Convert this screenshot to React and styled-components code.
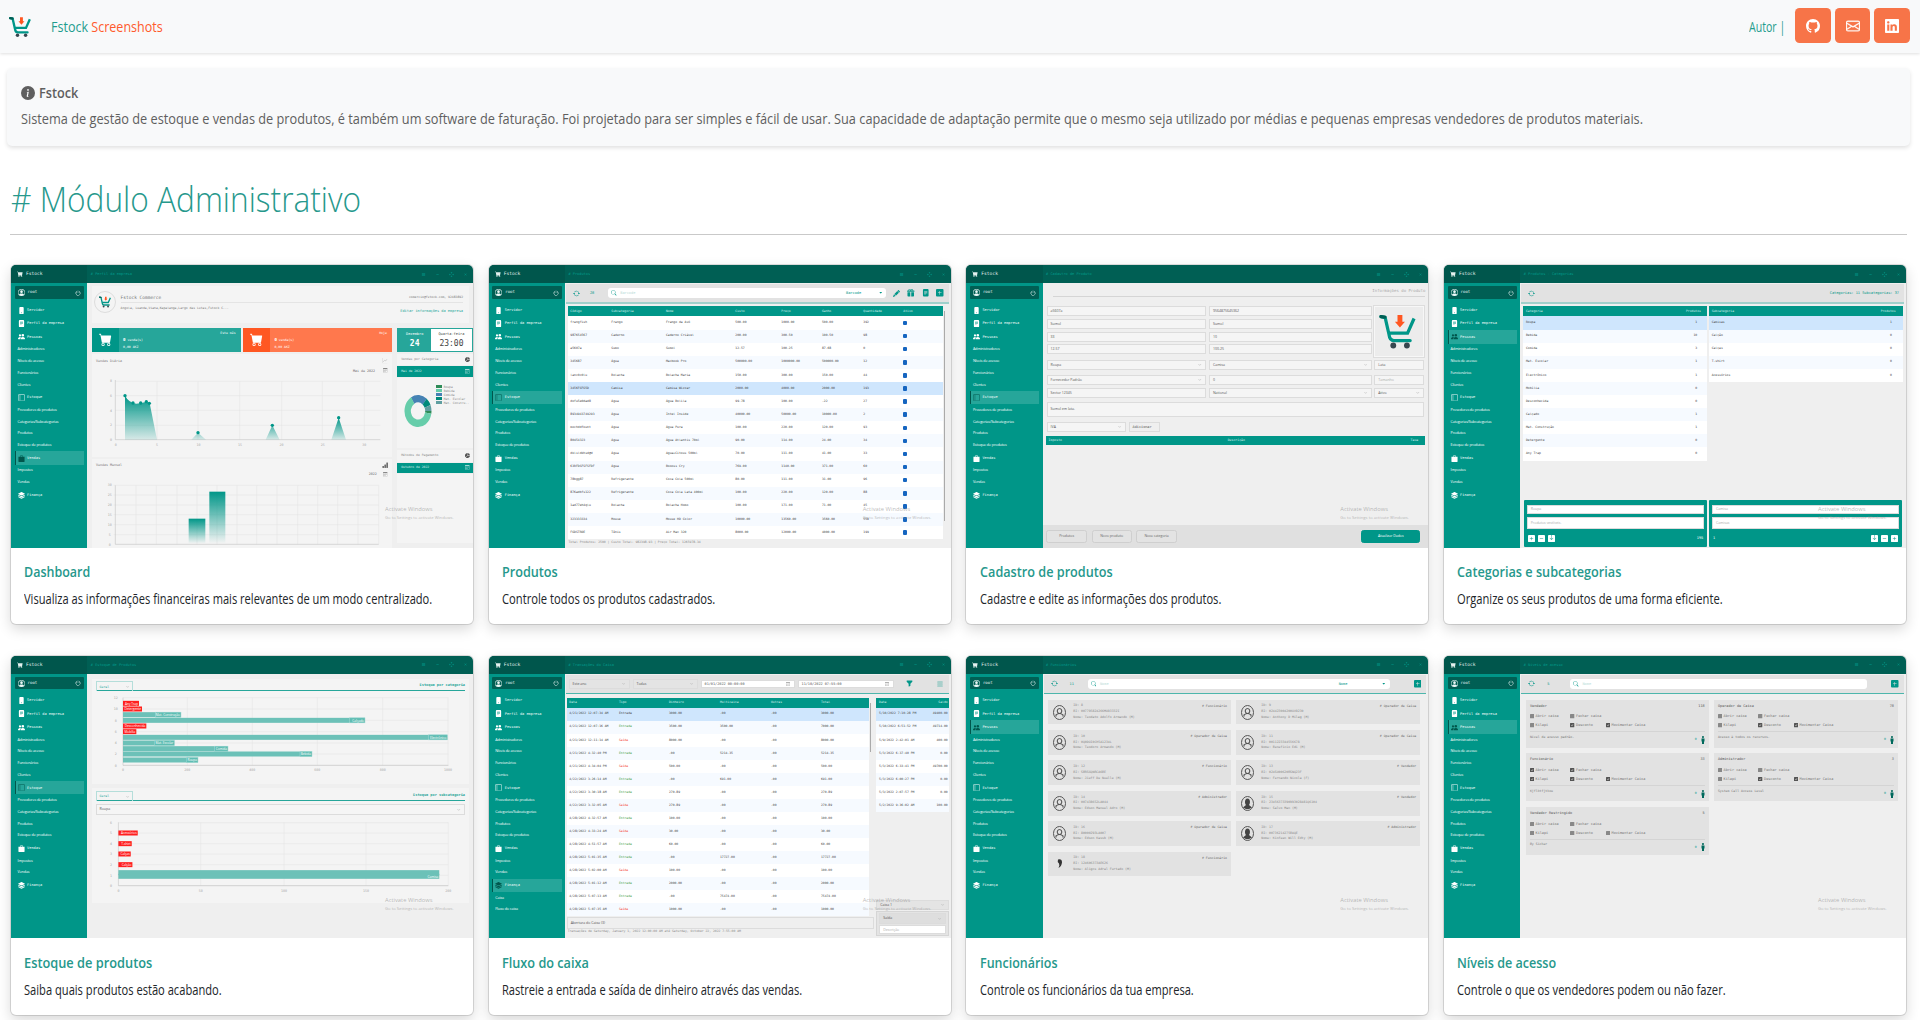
import React, { useLayoutEffect, useRef, useState } from "react";
import styled, { createGlobalStyle, css } from "styled-components";
import {
  BsGithub, BsEnvelope, BsLinkedin, BsInfoCircleFill, BsPhoneFill, BsFileTextFill, BsPeopleFill,
  BsLayoutSidebar, BsBagFill, BsStack, BsPersonCircle, BsPower, BsArrowRepeat, BsSearch, BsPencilFill,
  BsPlusSquareFill, BsDashSquareFill, BsSaveFill, BsFunnelFill, BsList, BsChevronDown, BsPieChartFill,
  BsGraphUp, BsBarChartFill, BsSquareFill, BsCheckSquareFill, BsCalendar3, BsCartFill, BsArrowsMove,
  BsX, BsDash, BsCaretDownFill, BsGiftFill,
} from "react-icons/bs";

const teal = "#009688";
const soft = "#26a69a";
const mono = '"DejaVu Sans Mono", "Liberation Mono", monospace';
const sans = '"Open Sans", "Noto Sans", sans-serif';

const Global = createGlobalStyle`
  * { box-sizing: border-box; }
  html, body { margin: 0; background: #fff; font-family: ${sans}; }
  body { height: 1020px; overflow: hidden; }
  svg { display: block; flex: none; }
`;

/* ---------- condensed text that fills a given width ---------- */
const FitBox = styled.span`
  display: block;
  width: ${(p) => p.$w}px;
  white-space: nowrap;
`;
const FitText = styled.span`
  display: inline-block;
  transform-origin: 0 50%;
`;
function Fit({ w, children }) {
  const ref = useRef(null);
  const [k, setK] = useState(1);
  useLayoutEffect(() => {
    setK(w / ref.current.offsetWidth);
  }, [w]);
  return (
    <FitBox $w={w}>
      <FitText ref={ref} style={{ transform: `scaleX(${k})` }}>{children}</FitText>
    </FitBox>
  );
}

/* ---------- page ---------- */
const Page = styled.div`
  height: 1020px;
  overflow: hidden;
`;
const Navbar = styled.header`
  display: flex;
  align-items: center;
  height: 53px;
  padding: 0 10px 2px 9px;
  background: #f8f9fa;
  box-shadow: 0 1px 3px rgba(0, 0, 0, 0.13);
`;
const Brand = styled.div`
  display: flex;
  align-items: center;
  gap: 20px;
  flex: 1;
  font-size: 15px;
  line-height: 20px;
  color: #1f9d8e;
`;
const Accent = styled.span`
  color: #ff5a2c;
`;
const LogoSlot = styled.div`
  padding-top: 3px;
`;
const Author = styled.div`
  margin-right: 10px;
  font-size: 15px;
  line-height: 20px;
  color: #1f9d8e;
`;
const Social = styled.div`
  display: flex;
  gap: 4px;
`;
const SocialButton = styled.a`
  display: grid;
  place-items: center;
  width: 35.6px;
  height: 35px;
  border-radius: 4.5px;
  background: #f77448;
  color: #fff;
`;
const Notice = styled.section`
  margin: 15px 10px 0 7px;
  height: 78px;
  padding: 15px 14px;
  border-radius: 5px;
  background: #f8f9fa;
  box-shadow: 0 2px 4px rgba(0, 0, 0, 0.12);
  color: #5f5f5f;
  font-size: 14px;
`;
const NoticeTitle = styled.div`
  display: flex;
  align-items: center;
  gap: 4px;
  line-height: 20px;
  font-weight: 600;
`;
const NoticeText = styled.div`
  margin-top: 6px;
  font-size: 14px;
  line-height: 20px;
`;
const Heading = styled.h1`
  margin: 28px 13px 0 10px;
  padding: 0 0 10px 1px;
  border-bottom: 1.5px solid #c9c9c9;
  font-size: 35px;
  line-height: 50px;
  font-weight: 300;
  color: #26988c;
`;
const Gallery = styled.main`
  display: grid;
  grid-template-columns: repeat(4, 462px);
  column-gap: 15.67px;
  row-gap: 32px;
  margin: 30px 0 0 11px;
`;
const Card = styled.article`
  height: 359px;
  border-radius: 5px;
  background: #fff;
  overflow: hidden;
  box-shadow: 0 0 0 1px rgba(0, 0, 0, 0.12), 0 5px 14px rgba(0, 0, 0, 0.16);
`;
const CardBody = styled.div`
  padding: ${(p) => (p.$second ? 15 : 14)}px 13.4px 0;
  font-size: 14px;
  line-height: 20px;
  color: #212529;
`;
const CardTitle = styled.div`
  margin-bottom: 7px;
  font-weight: 600;
  color: #26988c;
`;

/* ---------- miniature application window ---------- */
const Shot = styled.div`
  position: relative;
  display: flex;
  flex-direction: column;
  height: ${(p) => (p.$second ? 281.5 : 283)}px;
  overflow: hidden;
  background: #efefef;
  font-family: ${mono};
  font-size: 3.6px;
  line-height: 1.2;
  white-space: nowrap;
`;
const TopBar = styled.div`
  display: flex;
  align-items: center;
  flex: none;
  height: ${(p) => (p.$second ? 17.5 : 18.3)}px;
  background: #005f54;
  color: #009a8a;
`;
const TopBrand = styled.div`
  display: flex;
  align-items: center;
  gap: 3px;
  width: 76.3px;
  height: 100%;
  padding-left: 6px;
  background: #00564c;
  color: #e4f1ef;
  font-size: 4.6px;
`;
const TopTitle = styled.div`
  flex: 1;
  padding-left: 3.5px;
`;
const TopTools = styled.div`
  display: flex;
  gap: 9px;
  padding-right: 5px;
`;
const Body = styled.div`
  display: flex;
  flex: 1;
  min-height: 0;
`;
const Side = styled.nav`
  flex: none;
  width: 76.3px;
  padding: 3.2px 3.3px 0 3.6px;
  background: ${teal};
  color: #effaf9;
`;
const User = styled.div`
  display: flex;
  align-items: center;
  gap: 3px;
  height: 12.8px;
  margin-bottom: 4.2px;
  padding: 0 3px;
  border-radius: 1px;
  background: #005f54;
  font-size: 4px;
  span { flex: 1; }
`;
const Major = styled.div`
  display: flex;
  align-items: center;
  gap: 2.5px;
  height: 13.4px;
  padding-left: 2px;
  border-left: 1px solid ${(p) => (p.$on ? "#00564c" : "transparent")};
  background: ${(p) => (p.$on ? soft : "none")};
  svg { color: ${(p) => (p.$on ? "#00564c" : "#fff")}; }
`;
const Minor = styled.div`
  display: flex;
  align-items: center;
  height: 11.8px;
  padding-left: 3px;
  font-family: ${sans};
  font-size: 3.7px;
  letter-spacing: -0.12px;
  color: #fff;
`;
const Content = styled.div`
  flex: 1;
  min-width: 0;
  display: flex;
  flex-direction: column;
  padding: ${(p) => p.$pad || "0"};
`;
const Watermark = styled.div`
  position: absolute;
  left: 374px;
  top: 241px;
  font-family: ${sans};
  font-size: 5.8px;
  line-height: 7.8px;
  color: rgba(140, 140, 140, 0.6);
  div + div { font-size: 4.2px; }
`;

function CartLogo({ size, weight = 10 }) {
  return (
    <svg width={size} height={size} viewBox="0 0 114 112">
      <path d="M6 10 L19 13 L31 66 Q33 84 46 84 H96" fill="none" stroke={teal} strokeWidth={weight} strokeLinecap="round" />
      <path d="M6 10 L18 12" fill="none" stroke="#005f54" strokeWidth={weight} strokeLinecap="round" />
      <path d="M31 61 H88 L108 16" fill="none" stroke={teal} strokeWidth={weight} />
      <path d="M57 5 H72 V26 H80 L64.5 44 L49 26 H57 Z" fill="#ff5722" />
      <circle cx="44" cy="99" r="9" fill="#37474f" />
      <circle cx="86" cy="99" r="9" fill="#37474f" />
    </svg>
  );
}

const menu = [
  ["Servidor", BsPhoneFill],
  ["Perfil da empresa", BsFileTextFill],
  ["Pessoas", BsPeopleFill, ["Administradores", "Níveis de acesso", "Funcionários", "Clientes"]],
  ["Estoque", BsLayoutSidebar, ["Provedores de produtos", "Categorias/Subcategorias", "Produtos", "Estoque de produtos"]],
  ["Vendas", BsBagFill, ["Impostos", "Vendas"]],
  ["Finança", BsStack],
];

function AppWindow({ title, active, second, extra, children, pad }) {
  return (
    <Shot $second={second}>
      <TopBar $second={second}>
        <TopBrand><BsCartFill size={6} />Fstock</TopBrand>
        <TopTitle># {title}</TopTitle>
        <TopTools><BsList size={5} /><BsDash size={5} /><BsArrowsMove size={5} /><BsX size={5} /></TopTools>
      </TopBar>
      <Body>
        <Side>
          <User><BsPersonCircle size={7} /><span>root</span><BsPower size={6} /></User>
          {menu.map(([name, Icon, subs]) => (
            <React.Fragment key={name}>
              <Major $on={active === name}><Icon size={7} />{name}</Major>
              {(subs || []).map((s) => <Minor key={s}>{s}</Minor>)}
            </React.Fragment>
          ))}
          {(extra || []).map((s) => <Minor key={s}>{s}</Minor>)}
        </Side>
        <Content $pad={pad}>{children}</Content>
      </Body>
      <Watermark><div>Activate Windows</div><div>Go to Settings to activate Windows.</div></Watermark>
    </Shot>
  );
}

/* ---------- shared pieces ---------- */
const Tools = styled.div`
  display: flex;
  align-items: center;
  flex: none;
  gap: ${(p) => p.$gap || 7}px;
  height: 19.5px;
  margin: 1px 2px 0 1px;
  padding: 0 5px 0 ${(p) => p.$left || 7}px;
  background: #e2e2e2;
  border-bottom: ${(p) => (p.$thin ? 1 : 2.3)}px solid ${(p) => (p.$thin ? "#4db6ac" : "#9fd0cb")};
  color: ${teal};
`;
const Count = styled.div`
  width: 8px;
  margin-left: 3px;
`;
const SearchBox = styled.div`
  display: flex;
  align-items: center;
  gap: 3.5px;
  width: ${(p) => p.$w}px;
  height: 10.5px;
  margin-left: ${(p) => p.$ml || 4}px;
  padding: 0 4px 0 3px;
  border-radius: 3px;
  background: #fff;
  i { flex: 1; font-style: normal; color: #b9dcd8; }
  b { font-weight: 400; margin-right: 14px; }
`;
const Push = styled.div`
  flex: 1;
`;
const cols = css`
  display: grid;
  grid-template-columns: ${(p) => p.$cols};
  align-items: center;
  padding-left: 2.7px;
`;
const Table = styled.div`
  width: ${(p) => p.$w}px;
  color: #444;
  font-size: 3.1px;
`;
const Head = styled.div`
  ${cols}
  height: 10px;
  background: ${teal};
  color: #d5efec;
`;
const Line = styled.div`
  ${cols}
  height: ${(p) => p.$h || 13.1}px;
  background: ${(p) => (p.$sel ? "#cfe6fd" : p.$odd ? "#f6faff" : "#fff")};
`;
const Cell = styled.span`
  color: ${(p) => p.$c || "inherit"};
`;
const tone = (v) => (v === "Entrada" ? "#43a047" : v === "Saída" ? "#f44336" : undefined);
function DataTable({ w, columns, head, rows, selected, h }) {
  return (
    <Table $w={w}>
      <Head $cols={columns}>{head.map((x, i) => <span key={i}>{x}</span>)}</Head>
      {rows.map((r, i) => (
        <Line key={i} $cols={columns} $h={h} $odd={i % 2 === 1} $sel={i === selected}>
          {r.map((v, j) => <Cell key={j} $c={i === selected ? undefined : tone(v)}>{v}</Cell>)}
        </Line>
      ))}
    </Table>
  );
}
const Panel = styled.div`
  display: flex;
  flex-direction: column;
  flex: none;
  height: ${(p) => p.$h}px;
  padding: ${(p) => p.$p || "0"};
  background: #f4f4f4;
`;
const Columns = styled.div`
  display: flex;
  gap: ${(p) => p.$gap || 0}px;
  align-items: flex-start;
  padding: ${(p) => p.$p || "0"};
`;

/* ---------- dashboard ---------- */
const Company = styled(Panel)`
  flex-direction: row;
  align-items: center;
  margin: 2.7px 4px 4.6px 0;
  gap: 5px;
  padding: 0 6px 6px 2px;
`;
const Round = styled.div`
  display: grid;
  place-items: center;
  width: 22px;
  height: 22px;
  border: 0.8px solid #ddd;
  border-radius: 50%;
`;
const CompanyInfo = styled.div`
  flex: 1;
  padding-top: 5px;
  color: #777;
`;
const CompanyLine = styled.div`
  display: flex;
  justify-content: space-between;
  align-items: center;
  height: ${(p) => p.$h || 10}px;
  border-bottom: ${(p) => (p.$rule ? "0.6px solid #e4e4e4" : "0")};
  font-size: ${(p) => p.$fs || 3.1}px;
  em { font-style: normal; font-size: 3.6px; color: ${soft}; padding-top: 5px; }
  small { font-size: 3.1px; }
`;
const Stat = styled.div`
  display: flex;
  width: 149px;
  height: 24px;
  background: ${(p) => p.$bg};
  color: #fff;
  font-size: 3.2px;
`;
const StatIcon = styled.div`
  display: grid;
  place-items: center;
  width: 27px;
  background: ${(p) => p.$bg};
`;
const StatText = styled.div`
  flex: 1;
  padding: 8px 0 0 4.5px;
  line-height: 7.5px;
  b { font-size: 4.2px; }
`;
const StatTag = styled.div`
  padding: 4px 5px;
`;
const DateBox = styled.div`
  display: grid;
  grid-template-columns: 33px 1fr;
  width: 75.5px;
  height: 24px;
  margin-bottom: 2px;
  border: 0.6px solid ${soft};
  background: #fff;
  text-align: center;
`;
const DatePart = styled.div`
  padding-top: 3.5px;
  background: ${(p) => (p.$on ? soft : "#fff")};
  color: ${(p) => (p.$on ? "#fff" : "#444")};
  font-size: 3.6px;
  b { display: block; margin-top: 2px; font-size: 8px; font-weight: ${(p) => (p.$on ? 700 : 400)}; }
`;
const RightHead = styled.div`
  display: flex;
  align-items: center;
  justify-content: space-between;
  height: ${(p) => (p.$on ? 10.4 : 11.3)}px;
  margin-bottom: 1px;
  padding: 0 3px 0 4px;
  background: ${(p) => (p.$on ? teal : "#f4f4f4")};
  color: ${(p) => (p.$on ? "#d5efec" : "#888")};
  font-size: 3.1px;
`;
const RightBody = styled.div`
  display: flex;
  align-items: flex-start;
  gap: 4px;
  width: 75.5px;
  height: ${(p) => p.$h}px;
  margin-bottom: 2.6px;
  padding: 14px 0 0 7px;
  background: #f4f4f4;
`;
const Legend = styled.div`
  display: grid;
  margin-top: -7px;
  color: #888;
  font-size: 3px;
  line-height: 4px;
  div { display: flex; align-items: center; gap: 1.5px; }
`;
const Swatch = styled.i`
  width: 6px;
  height: 2.8px;
  background: ${(p) => p.$c};
`;

const axis = { stroke: "#e3e3e3", strokeWidth: 1.5, fill: "none" };
const tick = { fontFamily: mono, fontSize: 10, fill: "#aaa", textAnchor: "middle" };

function DayChart() {
  return (
    <svg width="300" height="102.7" viewBox="275 297 900 308">
      <defs>
        <linearGradient id="fade" x1="0" y1="0" x2="0" y2="1">
          <stop offset="0" stopColor={teal} /><stop offset="1" stopColor={teal} stopOpacity="0.12" />
        </linearGradient>
      </defs>
      <text x="287" y="320" {...tick} textAnchor="start" fill="#777">Vendas Diária</text>
      <text x="1124" y="350" {...tick} textAnchor="end" fill="#666">Mai de 2022</text>
      {[379, 422, 466, 511].map((y) => <path key={y} d={`M345 ${y}H1140`} {...axis} />)}
      {[470, 593, 718, 844, 966, 1092].map((x) => <path key={x} d={`M${x} 379V554`} {...axis} />)}
      <path d="M345 375V554H1140" {...axis} stroke="#bbb" />
      {["8", "6", "4", "2", "0"].map((t, i) => <text key={t} x="332" y={382 + i * 44} {...tick}>{t}</text>)}
      {["0", "5", "10", "15", "20", "25", "30"].map((t, i) => <text key={t} x={346 + i * 124.3} y="574" {...tick}>{t}</text>)}
      <path d="M374 554V422Q386 444 408 446Q425 444 438 440L448 445L470 554Z" fill="url(#fade)" />
      <path d="M573 554L593 533L617 554Z M796 554L816 511L838 554Z M993 554L1015 488L1037 554Z" fill="url(#fade)" />
      {[[374, 422], [398, 444], [421, 444], [438, 440], [447, 445], [593, 533], [816, 511], [1015, 488]].map(([x, y]) => (
        <circle key={x} cx={x} cy={y} r="5" fill={teal} />
      ))}
      <g transform="translate(1146 309)"><BsGraphUp size={16} color="#aaa" /></g>
      <g transform="translate(1148 339)"><BsCalendar3 size={14} color="#888" /></g>
    </svg>
  );
}
function MonthChart() {
  return (
    <svg width="300" height="89" viewBox="275 611 900 267">
      <defs>
        <linearGradient id="bar" x1="0" y1="0" x2="0" y2="1">
          <stop offset="0" stopColor={teal} /><stop offset="1" stopColor={teal} stopOpacity="0" />
        </linearGradient>
      </defs>
      <text x="287" y="633" {...tick} textAnchor="start" fill="#777">Vendas Mensal</text>
      <text x="1129" y="660" {...tick} textAnchor="end" fill="#666">2022</text>
      {[690, 719, 749, 778, 808, 838].map((y) => <path key={y} d={`M340 ${y}H1135`} {...axis} />)}
      {[407, 468, 530, 590, 650, 710, 769, 830, 892, 952, 1012, 1073, 1135].map((x) => <path key={x} d={`M${x} 690V867`} {...axis} />)}
      <path d="M345 690V867H1135" {...axis} stroke="#bbb" />
      {["30", "25", "20", "15", "10", "5", "0"].map((t, i) => <text key={t} x="328" y={693 + i * 29.6} {...tick}>{t}</text>)}
      <rect x="565" y="790" width="50" height="75" fill="url(#bar)" />
      <rect x="627" y="709" width="48" height="156" fill="url(#bar)" />
      <g transform="translate(1145 620)"><BsBarChartFill size={19} color="#666" /></g>
      <g transform="translate(1148 650)"><BsCalendar3 size={14} color="#888" /></g>
    </svg>
  );
}
function Donut() {
  const r = 31;
  const c = 2 * Math.PI * r;
  const parts = [["#4682b4", -32, 72], ["#00897b", 40, 28], ["#5f9ea0", 68, 22], ["#2e8b57", 90, 10], ["#66cdaa", 100, 228]];
  return (
    <svg width="28" height="38" viewBox="0 0 84 96" preserveAspectRatio="none">
      {parts.map(([col, start, len]) => (
        <circle key={start} cx="42" cy="48" r={r} fill="none" stroke={col} strokeWidth="19"
          strokeDasharray={`${(len / 360) * c} ${c}`} transform={`rotate(${start - 90} 42 48)`} />
      ))}
    </svg>
  );
}

function Dashboard() {
  return (
    <AppWindow title="Perfil da empresa" active="Vendas" pad="0 0 0 4.3px">
      <Company $h={37.4}>
        <Round><CartLogo size={12} weight={13} /></Round>
        <CompanyInfo>
          <CompanyLine $fs={4.5} $h={9} $rule>Fstock Commerce <small>comercio@fstock.com, 92483892</small></CompanyLine>
          <CompanyLine $h={12}>Angola, Luanda,Viana,Kapalanga,Largo das Lutas,Fstock C... <em>Editar informações da empresa</em></CompanyLine>
        </CompanyInfo>
      </Company>
      <Columns $gap={5.3}>
        <div>
          <Columns $gap={2.3}>
            <Stat $bg={soft}><StatIcon $bg={teal}><BsCartFill size={13} /></StatIcon><StatText><b>0</b> venda(s)<br />0,00 AKZ</StatText><StatTag>Este mês</StatTag></Stat>
            <Stat $bg="#ff784d"><StatIcon $bg="#ff5722"><BsCartFill size={13} /></StatIcon><StatText><b>0</b> venda(s)<br />0,00 AKZ</StatText><StatTag>Hoje</StatTag></Stat>
          </Columns>
          <Columns $p="2px 0"><Panel $h={102.7}><DayChart /></Panel></Columns>
          <Panel $h={89}><MonthChart /></Panel>
        </div>
        <div>
          <DateBox><DatePart $on>Dezembro<b>24</b></DatePart><DatePart>Quarta-feira<b>23:00</b></DatePart></DateBox>
          <RightHead>Vendas por Categoria <BsPieChartFill size={5} color="#555" /></RightHead>
          <RightHead $on>Mai de 2022 <BsCalendar3 size={4.5} /></RightHead>
          <RightBody $h={70}>
            <Donut />
            <Legend>
              {[["#2e8b57", "Roupa"], ["#66cdaa", "Bebida"], ["#4682b4", "Comida"], ["#00897b", "Mat. Escolar"], ["#5f9ea0", "Mat. Constru.."]].map(([c, t]) => (
                <div key={t}><Swatch $c={c} />{t}</div>
              ))}
            </Legend>
          </RightBody>
          <RightHead>Métodos de Pagamento <BsPieChartFill size={5} color="#555" /></RightHead>
          <RightHead $on>Outubro de 2022 <BsCalendar3 size={4.5} /></RightHead>
          <RightBody $h={69} />
        </div>
      </Columns>
    </AppWindow>
  );
}

/* ---------- products ---------- */
const Blue = styled.i`
  display: block;
  width: 4px;
  height: 4.5px;
  border-radius: 1px;
  background: #1565c0;
`;
const Scroll = styled.div`
  width: 1px;
  height: ${(p) => p.$h}px;
  margin: 5px 0 0 1px;
  background: #aaa;
`;
const Foot = styled.div`
  padding: ${(p) => p.$p || "2.5px 1px"};
  color: #888;
  font-size: 3.1px;
`;
const products = [
  ["frangfish", "Frango", "Frango da Avó", "500.00", "1000.00", "500.00", "392"],
  ["987654567", "Caderno", "Caderno Criável", "200.00", "300.50", "100.50", "98"],
  ["a5607a", "Sumo", "Sumol", "12.57", "100.25", "87.68", "0"],
  ["345687", "Água", "Macbook Pro", "500000.00", "1000000.00", "500000.00", "12"],
  ["lanc0c0lu", "Bolacha", "Bolacha Maria", "150.00", "300.00", "150.00", "44"],
  ["3456FGFG5D", "Camisa", "Camisa Wizzar", "2000.00", "4000.00", "2000.00", "193"],
  ["dofu5e0dad8", "Água", "Água Bolila", "99.78", "100.00", ".22", "27"],
  ["8934943749293", "Água", "Intel Inside", "40000.00", "50000.00", "10000.00", "2"],
  ["mochddfount", "Água", "Água Pura", "100.00", "220.00", "120.00", "93"],
  ["80454323", "Água", "Água Atlantis 70ml", "90.00", "114.00", "24.00", "34"],
  ["dklsldkhsd@d", "Água", "Agua+Citous 500ml", "70.00", "111.00", "41.00", "33"],
  ["63RFDSFSFSFDF", "Água", "Boooss Cry", "769.00", "1140.00", "371.00", "60"],
  ["78bgg87", "Refrigerante", "Coca Cola 500ml", "80.00", "111.00", "31.00", "96"],
  ["876adbfs122", "Refrigerante", "Coca Cola  Lata 400ml", "100.00", "220.00", "120.00", "88"],
  ["1ad77eh4qlu", "Bolacha", "Bolacha Homo", "100.00", "171.00", "71.00", "45"],
  ["323333334", "Mouse", "Mouse HD Color", "10000.00", "13560.00", "3560.00", "558"],
  ["FGDSTRDE", "Tênis", "Air Max 320", "8000.00", "12000.00", "4000.00", "199"],
];
function Products() {
  return (
    <AppWindow title="Produtos" active="Estoque">
      <Tools>
        <BsArrowRepeat size={7} /><Count>28</Count>
        <SearchBox $w={279} $ml={3.3}><BsSearch size={5.5} /><i>Barcode</i><b>Barcode</b><BsCaretDownFill size={3.5} /></SearchBox>
        <BsPencilFill size={7} /><BsGiftFill size={7.5} /><BsFileTextFill size={7.5} /><BsPlusSquareFill size={7.5} />
      </Tools>
      <Columns $p="2.7px 0 0 2.7px">
        <DataTable w={375} selected={5} columns="41px 54.6px 69.4px 46px 40.6px 41.4px 40px 38px"
          head={["Código", "Subcategoria", "Nome", "Custo", "Preço", "Ganho", "Quantidade", "Ativo"]}
          rows={products.map((r) => [...r, <Blue key="b" />])} />
        <Scroll $h={210} />
      </Columns>
      <Foot $p="2px 3.5px">Total Produtos: 2500 | Custo Total: 982398.93 | Preço Total:  1265978.34</Foot>
    </AppWindow>
  );
}

/* ---------- product form ---------- */
const FormTitle = styled.div`
  height: 12.5px;
  margin: 1.5px 3px 8.3px 10px;
  border-bottom: 0.7px solid #d5d5d5;
  text-align: right;
  line-height: 11px;
  font-size: 4px;
  color: #aaa;
`;
const Form = styled.div`
  display: grid;
  grid-template-columns: 159.7px 162.7px 49.7px;
  column-gap: 2.7px;
  grid-template-rows: 13.4px 13px 12.3px 15.7px 14.6px 13px 14px 20.4px 14.3px;
  margin-left: 4px;
  align-items: start;
`;
const Field = styled.div`
  display: flex;
  align-items: center;
  justify-content: space-between;
  height: ${(p) => p.$h || 10.2}px;
  width: ${(p) => (p.$w ? p.$w + "px" : "auto")};
  grid-column: ${(p) => p.$span || "auto"};
  padding: 0 3.5px 0 3px;
  border: 0.6px solid #dcdcdc;
  background: ${(p) => p.$bg || "#f5f5f5"};
  font-family: ${(p) => (p.$mono ? mono : sans)};
  font-size: 3.5px;
  color: ${(p) => (p.$dim ? "#aaa" : "#555")};
`;
const Picture = styled.div`
  grid-column: 3;
  grid-row: 1 / span 4;
  display: grid;
  justify-content: center;
  height: 51.5px;
  padding: 6px 3px 0 0;
  border: 1px solid #f7f7f7;
  outline: 0.5px solid #ddd;
  background: #ececec;
`;
const TaxHead = styled.div`
  display: flex;
  align-items: center;
  justify-content: space-between;
  height: 8.6px;
  margin: 0 3px;
  padding: 0 7px 0 3px;
  background: ${teal};
  color: #d5efec;
  font-size: 3.2px;
`;
const FormFoot = styled.div`
  display: flex;
  align-items: center;
  gap: 4.5px;
  height: 23.5px;
  padding: 0 8px 0 3.5px;
  background: #e0e0e0;
`;
const MiniButton = styled.div`
  display: grid;
  place-items: center;
  width: ${(p) => p.$w}px;
  height: 12.6px;
  border: 0.6px solid ${(p) => (p.$on ? teal : "#cfcfcf")};
  border-radius: 2.5px;
  background: ${(p) => (p.$on ? teal : "#e3e3e3")};
  color: ${(p) => (p.$on ? "#fff" : "#666")};
  font-family: ${sans};
  font-size: 3.5px;
`;
const Drop = () => <BsChevronDown size={3.5} color="#999" />;
function ProductForm() {
  return (
    <AppWindow title="Cadastro de Produto" active="Estoque">
      <FormTitle>Informações do Produto</FormTitle>
      <Form>
        <Field>a5607a</Field><Field>9564875645362</Field>
        <Picture><CartLogo size={37} /></Picture>
        <Field>Sumol</Field><Field>Sumol</Field>
        <Field>33</Field><Field>10</Field>
        <Field>12.57</Field><Field>100.25</Field>
        <Field>Roupa<Drop /></Field><Field>Camisa<Drop /></Field><Field>Lata</Field>
        <Field>Fornecedor Padrão<Drop /></Field><Field>0</Field><Field $dim>Tamanho</Field>
        <Field>Sector 12345</Field><Field>National<Drop /></Field><Field>Ativo<Drop /></Field>
        <Field $span="1 / -1" $h={15.6}>Sumol em lata.</Field>
        <Columns $gap={3}><Field $w={79}>IVA<Drop /></Field><Field $w={31} $mono $bg="#efefef">Adicionar</Field></Columns>
      </Form>
      <TaxHead><span>Imposto</span><span>Descrição</span><span>Taxa</span></TaxHead>
      <Push />
      <FormFoot>
        <MiniButton $w={41}>Produtos</MiniButton><MiniButton $w={40}>Novo produto</MiniButton><MiniButton $w={41}>Nova categoria</MiniButton>
        <Push /><MiniButton $on $w={59}>Atualizar Dados</MiniButton>
      </FormFoot>
    </AppWindow>
  );
}

/* ---------- categories ---------- */
const Editor = styled.div`
  display: flex;
  flex-direction: column;
  gap: 2.6px;
  width: ${(p) => p.$w}px;
  height: 46.8px;
  padding: 4.8px 3px;
  border-radius: 1px;
  background: ${teal};
  color: #fff;
`;
const EditorFoot = styled.div`
  display: flex;
  align-items: center;
  gap: 3.2px;
  margin-top: 3.5px;
  padding: 0 1px;
`;
function Categories() {
  const left = [["Roupa", "1"], ["Bebida", "10"], ["Comida", "3"], ["Mat. Escolar", "1"], ["Electrônico", "1"], ["Mobília", "0"], ["Desconhecida", "0"], ["Calçado", "1"], ["Mat. Construção", "1"], ["Detergente", "0"], ["Any Trap", "0"]];
  const right = [["Camisas", "1"], ["Calção", "0"], ["Calças", "0"], ["T-shirt", "0"], ["Acessórios", "0"]];
  const pad = ([a, b]) => [a, b.padStart(6, "\u00a0")];
  return (
    <AppWindow title="Produtos - Categorias" active="Pessoas">
      <Tools><BsArrowRepeat size={7} /><Push />Categorias: 11 Subcategorias: 37</Tools>
      <Columns $gap={1.7} $p="2.7px 0 0 3px">
        <DataTable w={184} columns="160px 20px" head={["Categoria", "Produtos"]} rows={left.map(pad)} selected={0} />
        <DataTable w={194} columns="169px 20px" head={["Subcategoria", "Produtos"]} rows={right.map(pad)} selected={0} />
      </Columns>
      <Push />
      <Columns $gap={1.7} $p="0 0 1.5px 3.5px">
        <Editor $w={183.5}>
          <Field $bg="#fff" $dim $h={9.6}>Roupa</Field><Field $bg="#fff" $dim $h={12}>Produtos vestíveis.</Field>
          <EditorFoot><BsPlusSquareFill size={7} /><BsDashSquareFill size={7} /><BsSaveFill size={7} /><Push />195</EditorFoot>
        </Editor>
        <Editor $w={193.5}>
          <Field $bg="#fff" $dim $h={9.6}>Camisa</Field><Field $bg="#fff" $dim $h={12}>Camisas</Field>
          <EditorFoot>1<Push /><BsSaveFill size={7} /><BsDashSquareFill size={7} /><BsPlusSquareFill size={7} /></EditorFoot>
        </Editor>
      </Columns>
    </AppWindow>
  );
}

/* ---------- stock ---------- */
const StockHead = styled.div`
  display: flex;
  justify-content: space-between;
  height: 10px;
  border-bottom: 0.7px solid ${soft};
  color: ${soft};
  font-size: 3.6px;
  line-height: 8px;
`;
const StockPick = styled.div`
  display: flex;
  align-items: center;
  justify-content: space-between;
  width: 37.5px;
  height: 9.6px;
  padding: 0 3px;
  border: 0.6px solid #b5deda;
  border-bottom: 0;
  font-size: 3.2px;
`;
function Bars({ box, h, x0, x1, ys, xs, xt, yt, bars, thick, top, bottom }) {
  return (
    <svg width="370" height={h} viewBox={box}>
      {ys.map((y) => <path key={y} d={`M${x0} ${y}H${x1}`} {...axis} />)}
      {xs.map((x) => <path key={x} d={`M${x} ${top}V${bottom}`} {...axis} />)}
      <path d={`M${x0} ${top}V${bottom}H${x1}`} {...axis} stroke="#bbb" />
      {ys.map((y, i) => <text key={y} x={x0 - 22} y={y + 4} {...tick}>{yt[i]}</text>)}
      {[x0, ...xs].map((x, i) => <text key={x} x={x} y={bottom + 18} {...tick}>{xt[i]}</text>)}
      {bars.map(([y, end, name, red, label]) => (
        <g key={y}>
          <rect x={x0} y={y - thick / 2} width={end - x0} height={thick} fill={red ? "#ff1f1f" : "#6cc1b8"} />
          {label && <rect x={end - label} y={y - thick / 2} width={label} height={thick} fill="#5fbdb3" stroke="#a8dbd6" strokeWidth="1.5" />}
          {name && <text x={end - 3} y={y + 4} {...tick} textAnchor="end" fill="#fff" fontSize="9.5" fontFamily={sans}>{name}</text>}
        </g>
      ))}
    </svg>
  );
}
function Stock() {
  return (
    <AppWindow second title="Estoque de Produtos" active="Estoque" pad="5.3px 4px 0 4.3px">
      <Panel $h={105.7} $p="2.7px 4px 0">
        <StockHead><StockPick>Geral<Drop /></StockPick><b>Estoque por categoria</b></StockHead>
        <Bars box="286 142 1110 270" h={90} x0={367} x1={1343} top={162} bottom={365} thick={15}
          ys={[162, 196, 230, 264, 298, 331, 365]} yt={["12", "10", "8", "6", "4", "2", "0"]}
          xs={[560, 755, 950, 1146, 1342]} xt={["0", "200", "400", "600", "800", "1000"]}
          bars={[[179, 415, "Any Trap", 1], [196, 424, "Detergente", 1], [213, 541, "Mat. Construção", 0, 77], [230, 1093, "Calçado", 0, 46], [247, 437, "Desconhecida", 1], [264, 407, "Mobília", 1], [281, 1340, "Electrônico", 0, 56], [298, 521, "Mat. Escolar", 0, 60], [315, 682, "Comida", 0, 40], [331, 934, "Bebida", 0, 36], [349, 592, "Roupa", 0, 35]].map(([y, e, n, r, l]) => [y, e, n, r, l])} />
      </Panel>
      <Columns $p="4px 0 0" />
      <Panel $h={114.3} $p="2.7px 4px 0">
        <StockHead><StockPick>Geral<Drop /></StockPick><b>Estoque por subcategoria</b></StockHead>
        <Columns $p="3.3px 0 0"><Field $w={370}>Roupa<Drop /></Field></Columns>
        <Bars box="286 508 1110 250" h={83.3} x0={353} x1={1343} top={530} bottom={720} thick={15}
          ys={[531, 562, 594, 625, 657, 689, 720]} yt={["6", "5", "4", "3", "2", "1", "0"]}
          xs={[600, 850, 1096, 1343]} xt={["0", "50", "100", "150", "200"]}
          bars={[[562, 411, "Acessórios", 1], [594, 393, "T-shirt", 1], [625, 390, "Calças", 1], [657, 395, "Calção", 1], [681, 1316, "", 0], [692, 1316, "Camisa", 0]]} />
      </Panel>
    </AppWindow>
  );
}

/* ---------- cash flow ---------- */
const flow = [
  ["4/21/2022 12:07:34 AM", "Entrada", "3000.00", ".00", ".00", "3000.00"],
  ["4/21/2022 12:07:16 AM", "Entrada", "3500.00", "3500.00", ".00", "7000.00"],
  ["4/21/2022 12:11:14 AM", "Saída", "8000.00", ".00", ".00", "8000.00"],
  ["4/21/2022 4:32:40 PM", "Entrada", ".00", "5214.35", ".00", "5214.35"],
  ["4/21/2022 4:34:04 PM", "Saída", "500.00", ".00", ".00", "500.00"],
  ["4/22/2022 3:26:14 AM", "Entrada", ".00", "691.00", ".00", "691.00"],
  ["4/22/2022 3:30:18 AM", "Entrada", "270.89", ".00", ".00", "270.89"],
  ["4/22/2022 3:32:05 AM", "Saída", "270.89", ".00", ".00", "270.89"],
  ["4/28/2022 4:32:57 AM", "Entrada", "100.00", ".00", ".00", "100.00"],
  ["4/28/2022 4:33:24 AM", "Saída", "30.00", ".00", ".00", "30.00"],
  ["4/28/2022 4:51:57 AM", "Entrada", "60.00", ".00", ".00", "60.00"],
  ["4/28/2022 5:01:35 AM", "Entrada", ".00", "17727.00", ".00", "17727.00"],
  ["4/28/2022 5:02:00 AM", "Saída", "100.00", ".00", ".00", "100.00"],
  ["4/28/2022 5:01:12 AM", "Entrada", "2000.00", ".00", ".00", "2000.00"],
  ["4/28/2022 5:07:13 AM", "Entrada", ".00", "75474.00", ".00", "75474.00"],
  ["4/28/2022 5:07:35 AM", "Saída", "1000.00", ".00", ".00", "1000.00"],
];
const balance = [
  ["5/10/2022 7:10:28 PM", "49400.00"], ["5/10/2022 6:51:52 PM", "49714.00"], ["5/9/2022 2:42:01 AM", "400.00"], ["5/3/2022 6:37:40 PM", "0.00"],
  ["5/3/2022 6:33:41 PM", "49700.00"], ["5/3/2022 6:00:27 PM", "0.00"], ["5/3/2022 2:07:57 PM", "0.00"], ["5/2/2022 9:36:02 AM", "100.00"],
];
const BalanceTable = styled.div`
  ${Head} span:last-child,
  ${Line} span:last-child {
    padding-right: 1px;
    text-align: right;
  }
`;
const SideForm = styled.div`
  display: grid;
  gap: 1.6px;
  width: 72.3px;
  margin-top: 87.5px;
`;
const SideInner = styled.div`
  display: grid;
  gap: 1.6px;
  height: 25px;
  padding: 1px 2px;
  border: 0.5px solid #d5d5d5;
  background: #e4e4e4;
  align-content: start;
`;
function CashFlow() {
  return (
    <AppWindow second title="Transações do Caixa" active="Finança" extra={["Caixa", "Fluxo do caixa"]}>
      <Tools $thin $gap={3} $left={2.6}>
        <Field $w={61} $bg="#e4e4e4">Este ano<Drop /></Field><Field $w={65} $bg="#e4e4e4">Todas<Drop /></Field>
        <Field $w={94} $bg="#fff" $h={7.5} $mono>01/01/2022 00:00:00<BsCalendar3 size={4} color="#999" /></Field>
        <Field $w={96} $bg="#fff" $h={7.5} $mono>11/10/2022 07:55:00<BsCalendar3 size={4} color="#999" /></Field>
        <Push /><BsFunnelFill size={7} /><Push /><Push /><BsList size={8} />
      </Tools>
      <Columns $p="3.8px 0 0 1.7px">
        <div>
          <Columns>
            <DataTable w={302} h={13.04} selected={0} columns="49.6px 50px 51px 51px 50px 44px" head={["Data", "Tipo", "Dinheiro", "Multicaixa", "Outras", "Total"]} rows={flow} />
            <Scroll $h={49} />
          </Columns>
          <Columns $p="1px 0 0"><Field $w={307} $h={11.3} $bg="#efefef">Abertura do Caixa (3)</Field></Columns>
          <Foot $p="1px 1px">Transações de Saturday, January 1, 2022 12:00:00 AM até Saturday, October 22, 2022 7:55:00 AM</Foot>
        </div>
        <Columns $p="0 0 0 2.7px">
          <div>
            <BalanceTable><DataTable w={72.3} h={13.04} selected={0} columns="1fr 20px" head={["Data", "Saldo"]} rows={balance} /></BalanceTable>
            <SideForm>
              <Field $bg="#e4e4e4">Caixa 1<Drop /></Field>
              <SideInner><Field $bg="#dedede">Saída<Drop /></Field><Field $bg="#fff" $dim $h={9}>Descrição</Field></SideInner>
            </SideForm>
          </div>
        </Columns>
      </Columns>
    </AppWindow>
  );
}

/* ---------- employees ---------- */
const People = styled.div`
  display: grid;
  grid-template-columns: 182.7px 184px;
  gap: ${(p) => p.$gap || 5.7}px 5.3px;
  padding: 5.7px 0 0 5.7px;
`;
const Person = styled.div`
  display: flex;
  align-items: center;
  gap: 7px;
  height: 24.7px;
  padding: 0 4px 0 5px;
  background: #e2e2e2;
  color: #888;
  font-size: 3.2px;
  line-height: 5.7px;
`;
const Role = styled.div`
  flex: 1;
  align-self: flex-start;
  padding-top: 4px;
  text-align: right;
  color: #666;
`;
function Employees() {
  const list = [
    ["8", "007795824266MO93332I", "Teodato Adolfo Armando (M)", "Funcionário"],
    ["9", "024423004200OV9230", "Anthony D Milag (M)", "Operador de Caixa"],
    ["10", "0Q0DOI0CH5A1234L", "Teodoro Armando (M)", "Operador de Caixa"],
    ["11", "0011223344556678", "Benefício Edi (M)", "Operador de Caixa"],
    ["12", "SBRSGQNRCA6BE", "Jieff De Nuelle (M)", "Funcionário"],
    ["13", "024SU00620RSNQ23F", "Fernando Nicola (F)", "Vendedor"],
    ["14", "007438652LA044", "Edson Manuel Adro (M)", "Administrador"],
    ["15", "23456373390993028481Q6104", "Salvo Man (M)", "Vendedor"],
    ["16", "80000293LA007", "Edson Kassb (M)", "Operador de Caixa"],
    ["17", "00736214275BAQE", "Kinfeen Will Edty (M)", "Administrador"],
    ["18", "124606373AE626", "Aligns Adral Furtado (M)", "Funcionário"],
  ];
  return (
    <AppWindow second title="Funcionários" active="Pessoas">
      <Tools $thin $gap={12}>
        <BsArrowRepeat size={7} />11
        <SearchBox $w={311} $ml={2}><BsSearch size={5.5} /><i>Nome</i><b>Nome</b><b /><BsCaretDownFill size={3.5} /></SearchBox>
        <Push /><BsPlusSquareFill size={7.5} />
      </Tools>
      <People>
        {list.map(([id, bi, name, role], i) => (
          <Person key={id}>
            {i === 10 ? (
              <svg width="13" height="13" viewBox="0 0 26 26"><path d="M10 5q8-2 8 6q-1 8-7 11q3-6 1-9q-4-3-2-8" fill="#333" /></svg>
            ) : (
              <svg width="13" height="15" viewBox="0 0 26 30">
                <ellipse cx="13" cy="15" rx="12" ry="14" fill="none" stroke="#555" strokeWidth="2" />
                {i === 7 || i === 9
                  ? <path d="M13 5c-6 0-6 10-3 13l-6 5q9 7 18 0l-6-5c3-3 3-13-3-13" fill="#444" />
                  : <path d="M13 7a4.5 5 0 1 0 .1 0M6 23v-3q7-6 14 0v3" fill="none" stroke="#555" strokeWidth="2.2" />}
              </svg>
            )}
            <div>ID: {id}<br />BI: {bi}<br />Nome: {name}</div>
            <Role># {role}</Role>
          </Person>
        ))}
      </People>
    </AppWindow>
  );
}

/* ---------- access levels ---------- */
const Level = styled.div`
  height: 48px;
  padding: 4px 4px 0;
  background: #e2e2e2;
  color: #777;
  font-size: 3.5px;
`;
const LevelTop = styled.div`
  display: flex;
  justify-content: space-between;
  height: 8.2px;
  color: #555;
`;
const Checks = styled.div`
  display: grid;
  grid-template-columns: 40.5px 35.5px 1fr;
  height: 9px;
  align-items: center;
  div { display: flex; align-items: center; gap: 1.3px; }
`;
const LevelFoot = styled.div`
  display: flex;
  justify-content: space-between;
  margin-top: 1.5px;
  padding-top: 3.5px;
  border-top: 0.6px solid #d4d4d4;
  font-size: 3.2px;
  b { display: flex; align-items: center; gap: 4px; font-weight: 400; color: ${teal}; }
`;
function Access() {
  const levels = [
    ["Vendedor", "118", "Nível de acesso padrão.", "00011"],
    ["Operador de Caixa", "78", "Acesso à todos os recursos.", "00011"],
    ["Funcionário", "33", "Kjflktfjtkou", "11111"],
    ["Administrador", "3", "System Call Access Level", "00011"],
    ["Vendedor Restringido", "5", "By Sicher", "00000"],
  ];
  const names = ["Abrir caixa", "Fechar caixa", "Kilapi", "Desconto", "Movimentar Caixa"];
  const check = (flags, i) => (
    <div>{flags[i] === "1" ? <BsCheckSquareFill size={4.3} color="#555" /> : <BsSquareFill size={4.3} color="#888" />}{names[i]}</div>
  );
  return (
    <AppWindow second title="Níveis de acesso" active="Pessoas">
      <Tools $thin $gap={12}>
        <BsArrowRepeat size={7} />5
        <SearchBox $w={306} $ml={9}><BsSearch size={5.5} /><i>Nome</i></SearchBox>
        <Push /><BsPlusSquareFill size={7.5} />
      </Tools>
      <People $gap={5.8}>
        {levels.map(([name, n, note, f]) => (
          <Level key={name}>
            <LevelTop><span>{name}</span><span>{n}</span></LevelTop>
            <Checks>{check(f, 0)}{check(f, 1)}</Checks>
            <Checks>{check(f, 2)}{check(f, 3)}{check(f, 4)}</Checks>
            <LevelFoot>
              {note}
              <b>0<svg width="4" height="8" viewBox="0 0 8 16"><path d="M4 0a2 2 0 1 1-.1 0M1 5h6v6h-1v5h-4v-5h-1z" fill="#00695c" /></svg></b>
            </LevelFoot>
          </Level>
        ))}
      </People>
    </AppWindow>
  );
}

const cards = [
  [Dashboard, "Dashboard", 66, "Visualiza as informações financeiras mais relevantes de um modo centralizado.", 408],
  [Products, "Produtos", 56, "Controle todos os produtos cadastrados.", 213],
  [ProductForm, "Cadastro de produtos", 133, "Cadastre e edite as informações dos produtos.", 241.5],
  [Categories, "Categorias e subcategorias", 164, "Organize os seus produtos de uma forma eficiente.", 266],
  [Stock, "Estoque de produtos", 128, "Saiba quais produtos estão acabando.", 198],
  [CashFlow, "Fluxo do caixa", 87, "Rastreie a entrada e saída de dinheiro através das vendas.", 300],
  [Employees, "Funcionários", 77.5, "Controle os funcionários da tua empresa.", 214],
  [Access, "Níveis de acesso", 99.5, "Controle o que os vendedores podem ou não fazer.", 269],
];

export default function App() {
  return (
    <Page>
      <Global />
      <Navbar>
        <Brand>
          <LogoSlot><CartLogo size={22} weight={12} /></LogoSlot>
          <Fit w={112}>Fstock <Accent>Screenshots</Accent></Fit>
        </Brand>
        <Author><Fit w={36}>Autor |</Fit></Author>
        <Social>
          <SocialButton><BsGithub size={14} /></SocialButton>
          <SocialButton><BsEnvelope size={14} strokeWidth={0.4} /></SocialButton>
          <SocialButton><BsLinkedin size={14} /></SocialButton>
        </Social>
      </Navbar>
      <Notice>
        <NoticeTitle><BsInfoCircleFill size={14} /><Fit w={39}>Fstock</Fit></NoticeTitle>
        <NoticeText>
          <Fit w={1622}>Sistema de gestão de estoque e vendas de produtos, é também um software de faturação. Foi projetado para ser simples e fácil de usar. Sua capacidade de adaptação permite que o mesmo seja utilizado por médias e pequenas empresas vendedores de produtos materiais.</Fit>
        </NoticeText>
      </Notice>
      <Heading><Fit w={350}># Módulo Administrativo</Fit></Heading>
      <Gallery>
        {cards.map(([Screen, title, tw, text, w], i) => (
          <Card key={title}>
            <Screen />
            <CardBody $second={i > 3}>
              <CardTitle><Fit w={tw}>{title}</Fit></CardTitle>
              <Fit w={w}>{text}</Fit>
            </CardBody>
          </Card>
        ))}
      </Gallery>
    </Page>
  );
}
